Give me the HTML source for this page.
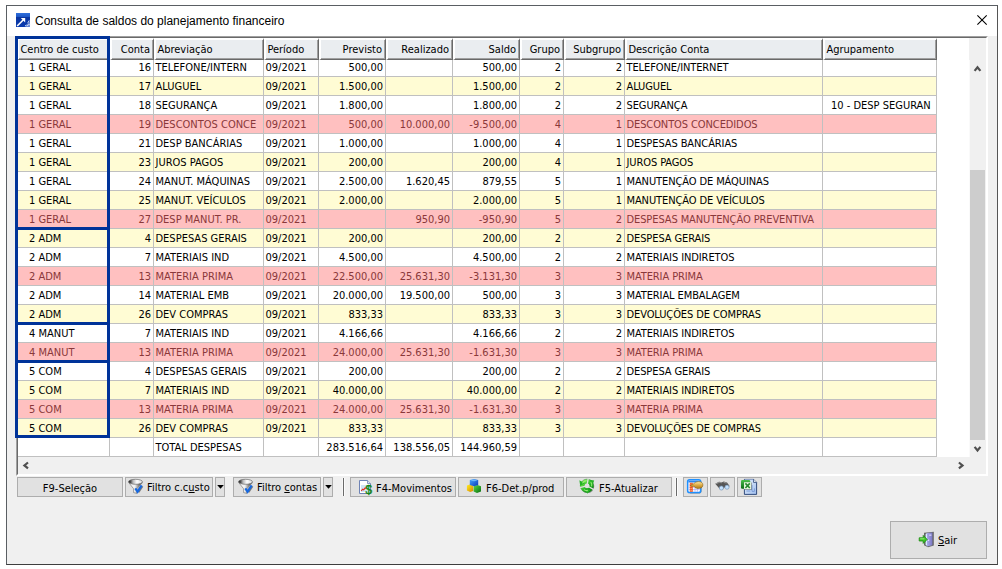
<!DOCTYPE html>
<html lang="pt-BR">
<head>
<meta charset="utf-8">
<title>Consulta de saldos do planejamento financeiro</title>
<style>
html,body{margin:0;padding:0;background:#fff;}
body{width:1002px;height:569px;overflow:hidden;position:relative;font-family:"DejaVu Sans Condensed","DejaVu Sans","Liberation Sans",sans-serif;font-stretch:condensed;font-size:11px;color:#000;}
.abs,.win div,.win svg{position:absolute;box-sizing:border-box;}
.win{position:absolute;left:6px;top:5px;width:992px;height:560px;border:1px solid #5a5e63;border-bottom-color:#3e3e3e;border-right-color:#555;background:#f0f0f0;box-sizing:border-box;}
.tb{left:0;top:0;width:990px;height:30px;background:#fff;}
.ttl{left:28px;top:6px;height:18px;line-height:18px;font-family:"Liberation Sans",sans-serif;font-size:12px;white-space:nowrap;}
.grid{left:9px;top:30px;width:972px;height:440px;border-top:1px solid #a0a0a0;border-left:1px solid #a0a0a0;border-right:1px solid #fff;border-bottom:1px solid #fff;background:#fff;}
.gin{left:0;top:0;width:970px;height:438px;border-top:1px solid #696969;border-left:1px solid #696969;border-right:1px solid #fff;border-bottom:1px solid #fff;background:#fff;overflow:hidden;}
.row{left:0;width:919px;height:19px;border-bottom:1px solid #c0c0c0;}
.row.w{background:#fff}.row.y{background:#fffcd4}.row.p{background:#ffc0c0;color:#8a383a}
.c{top:0;height:18px;line-height:20px;white-space:nowrap;overflow:hidden;border-right:1px solid #c0c0c0;padding:0 2px 0 1.5px;}
.c.r{text-align:right;padding-right:2px}
.c.c0{padding-left:12px}
.c.ag{padding-left:8px}
.c.ds{letter-spacing:-0.1px}
.h{top:0;height:22px;line-height:19px;background:#eaedf0;border-top:2px solid #fff;border-left:2px solid #fff;border-right:1px solid #696969;border-bottom:1px solid #696969;white-space:nowrap;overflow:hidden;padding:0 3px 0 1.4px;}
.h:after{content:"";position:absolute;right:0;bottom:0;left:-2px;top:-2px;border-right:1px solid #a0a0a0;border-bottom:1px solid #a0a0a0;}
.h.r{text-align:right}
.blue{background:#003399}
.btn{background:#e1e1e1;border:1px solid #adadad;height:20px;top:471px;white-space:nowrap;}
.btn .t{top:0;height:18px;line-height:18px;white-space:nowrap}

.sep{top:472px;width:1px;height:18px;background:#6a6a6a;box-shadow:1px 0 0 #fcfcfc,-1px 0 0 #f8f8f8}
u{text-decoration:underline;text-underline-offset:1px;text-decoration-thickness:1px}
</style>
</head>
<body>
<div class="win">
<div class="tb"></div>
<svg style="left:9px;top:7px" width="16" height="16" viewBox="0 0 16 16">
<defs><linearGradient id="tg" x1="0" y1="0" x2="0" y2="1"><stop offset="0" stop-color="#2f6fdc"/><stop offset="0.3" stop-color="#1c55c4"/><stop offset="0.32" stop-color="#0a35a0"/><stop offset="1" stop-color="#0b3cb0"/></linearGradient></defs>
<rect x="0" y="0" width="14" height="14" fill="url(#tg)"/>
<path d="M1.2 13 L7.4 6.8" stroke="#fff" stroke-width="1.6" fill="none"/>
<path d="M4.8 5 L9.2 5 L9.2 9.4 Z" fill="#fff"/>
<path d="M8.6 13.6 L10.4 11.2 L10.9 12.2 L12.2 8.6 L12.8 10 L13.6 7.2 L14 10.4 L14 14 Z" fill="#cfe0ff" opacity="0.5"/>
<path d="M9.2 13 l1.2-1.2 m0.6 1.6 l1.6-2.2 m-0.8-1.4 l1.4-2.4 m0.4 4.6 l0.6-1" stroke="#e8f0ff" stroke-width="0.9" fill="none" opacity="0.9"/>
</svg>
<div class="ttl">Consulta de saldos do planejamento financeiro</div>
<svg style="left:968px;top:7px" width="16" height="16" viewBox="0 0 16 16"><path d="M2.4 2.4 L11.7 11.7 M11.7 2.4 L2.4 11.7" stroke="#000" stroke-width="1.1" fill="none"/></svg>

<div class="grid"><div class="gin">
<div class="row w" style="top:20px">
<div class="c c0" style="left:-1px;width:93px">1 GERAL</div>
<div class="c r" style="left:92px;width:44px">16</div>
<div class="c l" style="left:136px;width:110px">TELEFONE/INTERN</div>
<div class="c l" style="left:246px;width:55px">09/2021</div>
<div class="c r" style="left:301px;width:67px">500,00</div>
<div class="c r" style="left:368px;width:67px"></div>
<div class="c r" style="left:435px;width:67px">500,00</div>
<div class="c r" style="left:502px;width:44px">2</div>
<div class="c r" style="left:546px;width:61px">2</div>
<div class="c ds" style="left:607px;width:198px">TELEFONE/INTERNET</div>
<div class="c ag" style="left:805px;width:114px"></div>
</div>
<div class="row y" style="top:39px">
<div class="c c0" style="left:-1px;width:93px">1 GERAL</div>
<div class="c r" style="left:92px;width:44px">17</div>
<div class="c l" style="left:136px;width:110px">ALUGUEL</div>
<div class="c l" style="left:246px;width:55px">09/2021</div>
<div class="c r" style="left:301px;width:67px">1.500,00</div>
<div class="c r" style="left:368px;width:67px"></div>
<div class="c r" style="left:435px;width:67px">1.500,00</div>
<div class="c r" style="left:502px;width:44px">2</div>
<div class="c r" style="left:546px;width:61px">2</div>
<div class="c ds" style="left:607px;width:198px">ALUGUEL</div>
<div class="c ag" style="left:805px;width:114px"></div>
</div>
<div class="row w" style="top:58px">
<div class="c c0" style="left:-1px;width:93px">1 GERAL</div>
<div class="c r" style="left:92px;width:44px">18</div>
<div class="c l" style="left:136px;width:110px">SEGURANÇA</div>
<div class="c l" style="left:246px;width:55px">09/2021</div>
<div class="c r" style="left:301px;width:67px">1.800,00</div>
<div class="c r" style="left:368px;width:67px"></div>
<div class="c r" style="left:435px;width:67px">1.800,00</div>
<div class="c r" style="left:502px;width:44px">2</div>
<div class="c r" style="left:546px;width:61px">2</div>
<div class="c ds" style="left:607px;width:198px">SEGURANÇA</div>
<div class="c ag" style="left:805px;width:114px">10 - DESP SEGURAN</div>
</div>
<div class="row p" style="top:77px">
<div class="c c0" style="left:-1px;width:93px">1 GERAL</div>
<div class="c r" style="left:92px;width:44px">19</div>
<div class="c l" style="left:136px;width:110px">DESCONTOS CONCE</div>
<div class="c l" style="left:246px;width:55px">09/2021</div>
<div class="c r" style="left:301px;width:67px">500,00</div>
<div class="c r" style="left:368px;width:67px">10.000,00</div>
<div class="c r" style="left:435px;width:67px">-9.500,00</div>
<div class="c r" style="left:502px;width:44px">4</div>
<div class="c r" style="left:546px;width:61px">1</div>
<div class="c ds" style="left:607px;width:198px">DESCONTOS CONCEDIDOS</div>
<div class="c ag" style="left:805px;width:114px"></div>
</div>
<div class="row w" style="top:96px">
<div class="c c0" style="left:-1px;width:93px">1 GERAL</div>
<div class="c r" style="left:92px;width:44px">21</div>
<div class="c l" style="left:136px;width:110px">DESP BANCÁRIAS</div>
<div class="c l" style="left:246px;width:55px">09/2021</div>
<div class="c r" style="left:301px;width:67px">1.000,00</div>
<div class="c r" style="left:368px;width:67px"></div>
<div class="c r" style="left:435px;width:67px">1.000,00</div>
<div class="c r" style="left:502px;width:44px">4</div>
<div class="c r" style="left:546px;width:61px">1</div>
<div class="c ds" style="left:607px;width:198px">DESPESAS BANCÁRIAS</div>
<div class="c ag" style="left:805px;width:114px"></div>
</div>
<div class="row y" style="top:115px">
<div class="c c0" style="left:-1px;width:93px">1 GERAL</div>
<div class="c r" style="left:92px;width:44px">23</div>
<div class="c l" style="left:136px;width:110px">JUROS PAGOS</div>
<div class="c l" style="left:246px;width:55px">09/2021</div>
<div class="c r" style="left:301px;width:67px">200,00</div>
<div class="c r" style="left:368px;width:67px"></div>
<div class="c r" style="left:435px;width:67px">200,00</div>
<div class="c r" style="left:502px;width:44px">4</div>
<div class="c r" style="left:546px;width:61px">1</div>
<div class="c ds" style="left:607px;width:198px">JUROS PAGOS</div>
<div class="c ag" style="left:805px;width:114px"></div>
</div>
<div class="row w" style="top:134px">
<div class="c c0" style="left:-1px;width:93px">1 GERAL</div>
<div class="c r" style="left:92px;width:44px">24</div>
<div class="c l" style="left:136px;width:110px">MANUT. MÁQUINAS</div>
<div class="c l" style="left:246px;width:55px">09/2021</div>
<div class="c r" style="left:301px;width:67px">2.500,00</div>
<div class="c r" style="left:368px;width:67px">1.620,45</div>
<div class="c r" style="left:435px;width:67px">879,55</div>
<div class="c r" style="left:502px;width:44px">5</div>
<div class="c r" style="left:546px;width:61px">1</div>
<div class="c ds" style="left:607px;width:198px">MANUTENÇÃO DE MÁQUINAS</div>
<div class="c ag" style="left:805px;width:114px"></div>
</div>
<div class="row y" style="top:153px">
<div class="c c0" style="left:-1px;width:93px">1 GERAL</div>
<div class="c r" style="left:92px;width:44px">25</div>
<div class="c l" style="left:136px;width:110px">MANUT. VEÍCULOS</div>
<div class="c l" style="left:246px;width:55px">09/2021</div>
<div class="c r" style="left:301px;width:67px">2.000,00</div>
<div class="c r" style="left:368px;width:67px"></div>
<div class="c r" style="left:435px;width:67px">2.000,00</div>
<div class="c r" style="left:502px;width:44px">5</div>
<div class="c r" style="left:546px;width:61px">1</div>
<div class="c ds" style="left:607px;width:198px">MANUTENÇÃO DE VEÍCULOS</div>
<div class="c ag" style="left:805px;width:114px"></div>
</div>
<div class="row p" style="top:172px">
<div class="c c0" style="left:-1px;width:93px">1 GERAL</div>
<div class="c r" style="left:92px;width:44px">27</div>
<div class="c l" style="left:136px;width:110px">DESP MANUT. PR.</div>
<div class="c l" style="left:246px;width:55px">09/2021</div>
<div class="c r" style="left:301px;width:67px"></div>
<div class="c r" style="left:368px;width:67px">950,90</div>
<div class="c r" style="left:435px;width:67px">-950,90</div>
<div class="c r" style="left:502px;width:44px">5</div>
<div class="c r" style="left:546px;width:61px">2</div>
<div class="c ds" style="left:607px;width:198px">DESPESAS MANUTENÇÃO PREVENTIVA</div>
<div class="c ag" style="left:805px;width:114px"></div>
</div>
<div class="row y" style="top:191px">
<div class="c c0" style="left:-1px;width:93px">2 ADM</div>
<div class="c r" style="left:92px;width:44px">4</div>
<div class="c l" style="left:136px;width:110px">DESPESAS GERAIS</div>
<div class="c l" style="left:246px;width:55px">09/2021</div>
<div class="c r" style="left:301px;width:67px">200,00</div>
<div class="c r" style="left:368px;width:67px"></div>
<div class="c r" style="left:435px;width:67px">200,00</div>
<div class="c r" style="left:502px;width:44px">2</div>
<div class="c r" style="left:546px;width:61px">2</div>
<div class="c ds" style="left:607px;width:198px">DESPESA GERAIS</div>
<div class="c ag" style="left:805px;width:114px"></div>
</div>
<div class="row w" style="top:210px">
<div class="c c0" style="left:-1px;width:93px">2 ADM</div>
<div class="c r" style="left:92px;width:44px">7</div>
<div class="c l" style="left:136px;width:110px">MATERIAIS IND</div>
<div class="c l" style="left:246px;width:55px">09/2021</div>
<div class="c r" style="left:301px;width:67px">4.500,00</div>
<div class="c r" style="left:368px;width:67px"></div>
<div class="c r" style="left:435px;width:67px">4.500,00</div>
<div class="c r" style="left:502px;width:44px">2</div>
<div class="c r" style="left:546px;width:61px">2</div>
<div class="c ds" style="left:607px;width:198px">MATERIAIS INDIRETOS</div>
<div class="c ag" style="left:805px;width:114px"></div>
</div>
<div class="row p" style="top:229px">
<div class="c c0" style="left:-1px;width:93px">2 ADM</div>
<div class="c r" style="left:92px;width:44px">13</div>
<div class="c l" style="left:136px;width:110px">MATERIA PRIMA</div>
<div class="c l" style="left:246px;width:55px">09/2021</div>
<div class="c r" style="left:301px;width:67px">22.500,00</div>
<div class="c r" style="left:368px;width:67px">25.631,30</div>
<div class="c r" style="left:435px;width:67px">-3.131,30</div>
<div class="c r" style="left:502px;width:44px">3</div>
<div class="c r" style="left:546px;width:61px">3</div>
<div class="c ds" style="left:607px;width:198px">MATERIA PRIMA</div>
<div class="c ag" style="left:805px;width:114px"></div>
</div>
<div class="row w" style="top:248px">
<div class="c c0" style="left:-1px;width:93px">2 ADM</div>
<div class="c r" style="left:92px;width:44px">14</div>
<div class="c l" style="left:136px;width:110px">MATERIAL EMB</div>
<div class="c l" style="left:246px;width:55px">09/2021</div>
<div class="c r" style="left:301px;width:67px">20.000,00</div>
<div class="c r" style="left:368px;width:67px">19.500,00</div>
<div class="c r" style="left:435px;width:67px">500,00</div>
<div class="c r" style="left:502px;width:44px">3</div>
<div class="c r" style="left:546px;width:61px">3</div>
<div class="c ds" style="left:607px;width:198px">MATERIAL EMBALAGEM</div>
<div class="c ag" style="left:805px;width:114px"></div>
</div>
<div class="row y" style="top:267px">
<div class="c c0" style="left:-1px;width:93px">2 ADM</div>
<div class="c r" style="left:92px;width:44px">26</div>
<div class="c l" style="left:136px;width:110px">DEV COMPRAS</div>
<div class="c l" style="left:246px;width:55px">09/2021</div>
<div class="c r" style="left:301px;width:67px">833,33</div>
<div class="c r" style="left:368px;width:67px"></div>
<div class="c r" style="left:435px;width:67px">833,33</div>
<div class="c r" style="left:502px;width:44px">3</div>
<div class="c r" style="left:546px;width:61px">3</div>
<div class="c ds" style="left:607px;width:198px">DEVOLUÇÕES DE COMPRAS</div>
<div class="c ag" style="left:805px;width:114px"></div>
</div>
<div class="row w" style="top:286px">
<div class="c c0" style="left:-1px;width:93px">4 MANUT</div>
<div class="c r" style="left:92px;width:44px">7</div>
<div class="c l" style="left:136px;width:110px">MATERIAIS IND</div>
<div class="c l" style="left:246px;width:55px">09/2021</div>
<div class="c r" style="left:301px;width:67px">4.166,66</div>
<div class="c r" style="left:368px;width:67px"></div>
<div class="c r" style="left:435px;width:67px">4.166,66</div>
<div class="c r" style="left:502px;width:44px">2</div>
<div class="c r" style="left:546px;width:61px">2</div>
<div class="c ds" style="left:607px;width:198px">MATERIAIS INDIRETOS</div>
<div class="c ag" style="left:805px;width:114px"></div>
</div>
<div class="row p" style="top:305px">
<div class="c c0" style="left:-1px;width:93px">4 MANUT</div>
<div class="c r" style="left:92px;width:44px">13</div>
<div class="c l" style="left:136px;width:110px">MATERIA PRIMA</div>
<div class="c l" style="left:246px;width:55px">09/2021</div>
<div class="c r" style="left:301px;width:67px">24.000,00</div>
<div class="c r" style="left:368px;width:67px">25.631,30</div>
<div class="c r" style="left:435px;width:67px">-1.631,30</div>
<div class="c r" style="left:502px;width:44px">3</div>
<div class="c r" style="left:546px;width:61px">3</div>
<div class="c ds" style="left:607px;width:198px">MATERIA PRIMA</div>
<div class="c ag" style="left:805px;width:114px"></div>
</div>
<div class="row w" style="top:324px">
<div class="c c0" style="left:-1px;width:93px">5 COM</div>
<div class="c r" style="left:92px;width:44px">4</div>
<div class="c l" style="left:136px;width:110px">DESPESAS GERAIS</div>
<div class="c l" style="left:246px;width:55px">09/2021</div>
<div class="c r" style="left:301px;width:67px">200,00</div>
<div class="c r" style="left:368px;width:67px"></div>
<div class="c r" style="left:435px;width:67px">200,00</div>
<div class="c r" style="left:502px;width:44px">2</div>
<div class="c r" style="left:546px;width:61px">2</div>
<div class="c ds" style="left:607px;width:198px">DESPESA GERAIS</div>
<div class="c ag" style="left:805px;width:114px"></div>
</div>
<div class="row y" style="top:343px">
<div class="c c0" style="left:-1px;width:93px">5 COM</div>
<div class="c r" style="left:92px;width:44px">7</div>
<div class="c l" style="left:136px;width:110px">MATERIAIS IND</div>
<div class="c l" style="left:246px;width:55px">09/2021</div>
<div class="c r" style="left:301px;width:67px">40.000,00</div>
<div class="c r" style="left:368px;width:67px"></div>
<div class="c r" style="left:435px;width:67px">40.000,00</div>
<div class="c r" style="left:502px;width:44px">2</div>
<div class="c r" style="left:546px;width:61px">2</div>
<div class="c ds" style="left:607px;width:198px">MATERIAIS INDIRETOS</div>
<div class="c ag" style="left:805px;width:114px"></div>
</div>
<div class="row p" style="top:362px">
<div class="c c0" style="left:-1px;width:93px">5 COM</div>
<div class="c r" style="left:92px;width:44px">13</div>
<div class="c l" style="left:136px;width:110px">MATERIA PRIMA</div>
<div class="c l" style="left:246px;width:55px">09/2021</div>
<div class="c r" style="left:301px;width:67px">24.000,00</div>
<div class="c r" style="left:368px;width:67px">25.631,30</div>
<div class="c r" style="left:435px;width:67px">-1.631,30</div>
<div class="c r" style="left:502px;width:44px">3</div>
<div class="c r" style="left:546px;width:61px">3</div>
<div class="c ds" style="left:607px;width:198px">MATERIA PRIMA</div>
<div class="c ag" style="left:805px;width:114px"></div>
</div>
<div class="row y" style="top:381px">
<div class="c c0" style="left:-1px;width:93px">5 COM</div>
<div class="c r" style="left:92px;width:44px">26</div>
<div class="c l" style="left:136px;width:110px">DEV COMPRAS</div>
<div class="c l" style="left:246px;width:55px">09/2021</div>
<div class="c r" style="left:301px;width:67px">833,33</div>
<div class="c r" style="left:368px;width:67px"></div>
<div class="c r" style="left:435px;width:67px">833,33</div>
<div class="c r" style="left:502px;width:44px">3</div>
<div class="c r" style="left:546px;width:61px">3</div>
<div class="c ds" style="left:607px;width:198px">DEVOLUÇÕES DE COMPRAS</div>
<div class="c ag" style="left:805px;width:114px"></div>
</div>
<div class="row w" style="top:400px">
<div class="c c0" style="left:-1px;width:93px"></div>
<div class="c r" style="left:92px;width:44px"></div>
<div class="c l" style="left:136px;width:110px">TOTAL DESPESAS</div>
<div class="c l" style="left:246px;width:55px"></div>
<div class="c r" style="left:301px;width:67px">283.516,64</div>
<div class="c r" style="left:368px;width:67px">138.556,05</div>
<div class="c r" style="left:435px;width:67px">144.960,59</div>
<div class="c r" style="left:502px;width:44px"></div>
<div class="c r" style="left:546px;width:61px"></div>
<div class="c ds" style="left:607px;width:198px"></div>
<div class="c ag" style="left:805px;width:114px"></div>
</div>
<div class="h l" style="left:-1px;width:93px">Centro de custo</div>
<div class="h r" style="left:92px;width:44px">Conta</div>
<div class="h l" style="left:136px;width:110px">Abreviação</div>
<div class="h l" style="left:246px;width:55px">Período</div>
<div class="h r" style="left:301px;width:67px">Previsto</div>
<div class="h r" style="left:368px;width:67px">Realizado</div>
<div class="h r" style="left:435px;width:67px">Saldo</div>
<div class="h r" style="left:502px;width:44px">Grupo</div>
<div class="h r" style="left:546px;width:61px">Subgrupo</div>
<div class="h l" style="left:607px;width:198px">Descrição Conta</div>
<div class="h l" style="left:805px;width:114px">Agrupamento</div>
<div style="left:951px;top:0;width:17px;height:436px;background:#f0f0f0"></div>
<div style="left:0;top:419px;width:968px;height:17px;background:#f0f0f0"></div>
<div style="left:951px;top:22px;width:1px;height:397px;background:#fafafa"></div>
<div style="left:952px;top:132px;width:15px;height:270px;background:#cdcdcd"></div>
<svg style="left:951px;top:22px" width="17" height="17" viewBox="0 0 17 17"><path d="M5.6 10.9 L8.5 7.3 L11.4 10.9" stroke="#505050" stroke-width="2.2" fill="none"/></svg>
<svg style="left:951px;top:402px" width="17" height="17" viewBox="0 0 17 17"><path d="M5.6 6.9 L8.5 10.5 L11.4 6.9" stroke="#505050" stroke-width="2.2" fill="none"/></svg>
<svg style="left:-1px;top:419px" width="17" height="17" viewBox="0 0 17 17"><path d="M11 5.5 L7.4 8.4 L11 11.3" stroke="#505050" stroke-width="2.2" fill="none"/></svg>
<svg style="left:934px;top:419px" width="17" height="17" viewBox="0 0 17 17"><path d="M6.9 5.5 L10.5 8.4 L6.9 11.3" stroke="#505050" stroke-width="2.2" fill="none"/></svg>

</div></div>
<div class="blue" style="left:8px;top:30px;width:3px;height:402px"></div>
<div class="blue" style="left:100px;top:30px;width:3px;height:402px"></div>
<div class="blue" style="left:8px;top:30px;width:95px;height:3px"></div>
<div class="blue" style="left:8px;top:221px;width:95px;height:3px"></div>
<div class="blue" style="left:8px;top:316px;width:95px;height:3px"></div>
<div class="blue" style="left:8px;top:354px;width:95px;height:3px"></div>
<div class="blue" style="left:8px;top:429px;width:95px;height:3px"></div>
<div class="btn" style="left:10px;top:471px;width:106px;height:20px"><div class="t" style="left:0;top:2px;width:104px;text-align:center">F9-Seleção</div></div>
<div class="btn" style="left:118px;top:471px;width:88px;height:20px"><svg style="left:2px;top:0px" width="16" height="16" viewBox="0 0 16 16">
<defs><linearGradient id="fg1" x1="0" y1="0" x2="1" y2="0"><stop offset="0" stop-color="#141414"/><stop offset="0.14" stop-color="#4a4a4a"/><stop offset="0.32" stop-color="#b8b8b8"/><stop offset="0.6" stop-color="#ffffff"/><stop offset="1" stop-color="#d8d8d8"/></linearGradient>
<linearGradient id="fh1" x1="0" y1="0" x2="1" y2="0"><stop offset="0" stop-color="#ffffff"/><stop offset="0.45" stop-color="#f0f0f0"/><stop offset="0.75" stop-color="#7a7a7a"/><stop offset="1" stop-color="#4c4c4c"/></linearGradient></defs>
<path d="M0.8 4.6 L5.6 10.8 L5.6 14.6 L8.8 15.4 L9 10.8 L14.4 4.6 Z" fill="url(#fh1)" stroke="#6e6e6e" stroke-width="0.6"/>
<ellipse cx="7.5" cy="3.8" rx="7" ry="2.5" fill="url(#fg1)" stroke="#6a6a6a" stroke-width="0.7"/>
<path d="M10.6 14.2 L14.6 8.2" stroke="#5a5a5a" stroke-width="1.6" fill="none" opacity="0.75"/>
<path d="M7.3 10.4 L9.6 13.7 L13.6 7.4" stroke="#1668e0" stroke-width="2.2" fill="none" stroke-linejoin="miter"/>
</svg><div class="t" style="left:21px;top:1px">Filtro c.c<u>u</u>sto</div></div>
<div class="btn" style="left:208px;top:471px;width:10px;height:20px"><svg style="left:1px;top:7px" width="7" height="4" viewBox="0 0 7 4"><path d="M0.2 0 H6.8 L3.5 3.7 Z" fill="#000"/></svg></div>
<div class="btn" style="left:226px;top:471px;width:88px;height:20px"><svg style="left:4px;top:0px" width="16" height="16" viewBox="0 0 16 16">
<defs><linearGradient id="fg2" x1="0" y1="0" x2="1" y2="0"><stop offset="0" stop-color="#141414"/><stop offset="0.14" stop-color="#4a4a4a"/><stop offset="0.32" stop-color="#b8b8b8"/><stop offset="0.6" stop-color="#ffffff"/><stop offset="1" stop-color="#d8d8d8"/></linearGradient>
<linearGradient id="fh2" x1="0" y1="0" x2="1" y2="0"><stop offset="0" stop-color="#ffffff"/><stop offset="0.45" stop-color="#f0f0f0"/><stop offset="0.75" stop-color="#7a7a7a"/><stop offset="1" stop-color="#4c4c4c"/></linearGradient></defs>
<path d="M0.8 4.6 L5.6 10.8 L5.6 14.6 L8.8 15.4 L9 10.8 L14.4 4.6 Z" fill="url(#fh2)" stroke="#6e6e6e" stroke-width="0.6"/>
<ellipse cx="7.5" cy="3.8" rx="7" ry="2.5" fill="url(#fg2)" stroke="#6a6a6a" stroke-width="0.7"/>
<path d="M10.6 14.2 L14.6 8.2" stroke="#5a5a5a" stroke-width="1.6" fill="none" opacity="0.75"/>
<path d="M7.3 10.4 L9.6 13.7 L13.6 7.4" stroke="#1668e0" stroke-width="2.2" fill="none" stroke-linejoin="miter"/>
</svg><div class="t" style="left:23px;top:1px">Filtro <u>c</u>ontas</div></div>
<div class="btn" style="left:316px;top:471px;width:10px;height:20px"><svg style="left:1px;top:7px" width="7" height="4" viewBox="0 0 7 4"><path d="M0.2 0 H6.8 L3.5 3.7 Z" fill="#000"/></svg></div>
<div class="sep" style="left:336px"></div>
<div class="btn" style="left:343px;top:471px;width:106px;height:20px"><svg style="left:7px;top:1px" width="16" height="17" viewBox="0 0 16 17">
<path d="M1.5 1.5 H9.5 L12.5 4.5 V14.5 H1.5 Z" fill="#fff" stroke="#6e83b5" stroke-width="1"/>
<path d="M9.5 1.5 V4.5 H12.5" fill="#dfe6f5" stroke="#6e83b5" stroke-width="0.8"/>
<rect x="3" y="6" width="8" height="7" fill="#cfe4f5"/>
<path d="M3.2 12 L4.6 10.2 L5.6 10.8 L7.2 9 L8.6 9.2" stroke="#e03020" stroke-width="1.2" fill="none"/>
<text x="7.4" y="14.6" transform="translate(7.4 0) scale(0.9 1) translate(-7.4 0)" font-family="Liberation Sans, sans-serif" font-size="13" fill="#128412" stroke="#128412" stroke-width="0.45">$</text>
</svg><div class="t" style="left:25px;top:2px">F4-Movimentos</div></div>
<div class="btn" style="left:451px;top:471px;width:106px;height:20px"><svg style="left:7px;top:0px" width="16" height="16" viewBox="0 0 16 16">
<defs><linearGradient id="cb" x1="0" y1="0" x2="1" y2="1"><stop offset="0" stop-color="#48a8ff"/><stop offset="1" stop-color="#0a3ab8"/></linearGradient>
<linearGradient id="cy" x1="0" y1="0" x2="1" y2="1"><stop offset="0" stop-color="#fff020"/><stop offset="1" stop-color="#d88400"/></linearGradient>
<linearGradient id="cg" x1="0" y1="0" x2="1" y2="1"><stop offset="0" stop-color="#58d848"/><stop offset="1" stop-color="#08700e"/></linearGradient></defs>
<path d="M7.6 8 L11.6 7 L15 8.2 L15 13.4 L11 15 L7.6 13.6 Z" fill="url(#cg)"/>
<path d="M0.9 7.6 L3.8 6.4 L7.2 7.8 L7.2 13 L4.2 14 L0.9 12.6 Z" fill="url(#cy)"/>
<path d="M3.8 2 L8 1 L12.2 2 L12.2 7 L8.2 8.2 L3.8 7 Z" fill="url(#cb)"/>
<path d="M4.4 2.4 L8 1.6 L11.6 2.4 L8 3.2 Z" fill="#7cc4ff" opacity="0.8"/>
</svg><div class="t" style="left:27px;top:2px">F6-Det.p/prod</div></div>
<div class="btn" style="left:559px;top:471px;width:106px;height:20px"><svg style="left:12px;top:0px" width="17" height="17" viewBox="0 0 17 17">
<defs><linearGradient id="rg" x1="0" y1="0" x2="1" y2="1"><stop offset="0" stop-color="#7be84e"/><stop offset="0.5" stop-color="#2ebc2c"/><stop offset="1" stop-color="#0e8a16"/></linearGradient></defs>
<g transform="translate(0.7 0.8)" opacity="0.45"><circle cx="8" cy="7.8" r="4.5" fill="none" stroke="#3a3a3a" stroke-width="4"/></g>
<circle cx="8" cy="7.8" r="4.5" fill="none" stroke="url(#rg)" stroke-width="4.2"/>
<circle cx="8" cy="7.8" r="6.7" fill="none" stroke="#128412" stroke-width="0.6" opacity="0.7"/>
<circle cx="8" cy="7.8" r="2.3" fill="#e1e1e1"/>
<path d="M8 7.8 L9.2 0.4 M8 7.8 L14.8 11.6 M8 7.8 L0.8 9.6" stroke="#e1e1e1" stroke-width="1.3"/>
<path d="M0.4 2.2 L1.2 8 L5.8 5.2 Z M15.2 2.4 L10.6 1.8 L13.6 6.4 Z M8.6 15.8 L6 11.4 L11.2 11.8 Z" fill="#24b226"/>
<path d="M3.4 5.2 C4.4 3.4 6 2.6 7.6 2.6 M11.8 4 C12.8 5.4 13 7 12.6 8.4 M5 11.6 C6 12.4 7.4 12.8 8.8 12.4" stroke="#a4f47c" stroke-width="1.1" fill="none" opacity="0.9"/>
</svg><div class="t" style="left:32px;top:2px">F5-Atualizar</div></div>
<div class="sep" style="left:669px"></div>
<div class="btn" style="left:676px;top:471px;width:25px;height:20px"><svg style="left:2px;top:0px" width="19" height="17" viewBox="0 0 19 17">
<defs><linearGradient id="hg" x1="0" y1="0" x2="0" y2="1"><stop offset="0" stop-color="#fbecb4"/><stop offset="0.45" stop-color="#e4b24c"/><stop offset="1" stop-color="#a87818"/></linearGradient></defs>
<rect x="2.5" y="2.5" width="13" height="12.9" rx="1.8" fill="#404040" opacity="0.6"/>
<rect x="1.65" y="1.65" width="13" height="12.9" rx="1.8" fill="#fff" stroke="#1e90ff" stroke-width="1.5"/>
<rect x="2.4" y="2.6" width="11.4" height="1.9" fill="#2f86ee"/>
<path d="M2.4 7 H13.8 M2.4 9.3 H13.8 M2.4 11.6 H13.8 M9 4.8 V13.8 M11.4 4.8 V13.8" stroke="#b4aef0" stroke-width="0.8"/>
<rect x="3.8" y="4.8" width="3" height="9" fill="#f2561e"/>
<path d="M4.3 6.2 H6.3 M4.3 8.4 H6.3 M4.3 10.6 H6.3 M4.3 12.6 H6.3" stroke="#ffb090" stroke-width="0.7"/>
<path d="M4.6 7.2 L8 5.6 C9 4.4 10.4 3.7 12.4 3.6 C15 3.5 16.9 4.8 16.9 6.9 C16.9 8.7 15.8 9.8 13.8 10.3 C11.8 10.8 10 10.4 9.2 9.6 C8.8 9.2 8.6 8.8 8.4 8.4 L5 8.2 Z" fill="url(#hg)" stroke="#8a6210" stroke-width="0.6"/>
</svg></div>
<div class="btn" style="left:703px;top:471px;width:25px;height:20px"><svg style="left:3px;top:0px" width="17" height="16" viewBox="0 0 17 16">
<path d="M1.2 5.8 L5 3.8 L8.2 4.2 L9.8 3.6 L13 4.4 L15.6 8 L13.4 10.6 L10.6 9.4 L8.2 11.4 L5.4 10.6 Z" fill="#565656"/>
<path d="M2 5.8 L5.2 4.4 L8 4.8 M9.6 4.4 L12.6 5" stroke="#a4a4a4" stroke-width="0.8" fill="none"/>
<circle cx="7.4" cy="10" r="2.1" fill="#c4e2ff" stroke="#7090b4" stroke-width="0.6"/>
<circle cx="13" cy="9.2" r="2.1" fill="#c4e2ff" stroke="#7090b4" stroke-width="0.6"/>
</svg></div>
<div class="btn" style="left:730px;top:471px;width:25px;height:20px"><svg style="left:2px;top:0px" width="18" height="18" viewBox="0 0 18 18">
<defs><linearGradient id="xd" x1="0" y1="0" x2="1" y2="1"><stop offset="0" stop-color="#eef4fd"/><stop offset="1" stop-color="#9cbcec"/></linearGradient>
<linearGradient id="xg" x1="0" y1="0" x2="0" y2="1"><stop offset="0" stop-color="#4cc04c"/><stop offset="1" stop-color="#0a6a14"/></linearGradient></defs>
<path d="M4.4 1.4 H13.6 L16.6 4.4 V16.4 H4.4 Z" fill="url(#xd)" stroke="#203c70" stroke-width="0.9"/>
<path d="M13.6 1.4 V4.4 H16.6" fill="#fff" stroke="#203c70" stroke-width="0.8"/>
<path d="M4.9 1.9 H13.2" stroke="#bcd0f4" stroke-width="1"/>
<path d="M6.4 13 H10.4 M12 7 V13.4 H14.4 V10.4" stroke="#7a9cd8" stroke-width="1" fill="none"/>
<rect x="1" y="2" width="9.2" height="8.8" rx="1.2" fill="url(#xg)"/>
<rect x="4.4" y="4.6" width="7.4" height="7.2" fill="#3a3a3a" opacity="0.6"/>
<rect x="4" y="4.2" width="7.2" height="7" fill="#e6f6dc"/>
<path d="M5.4 5.4 L9.8 10 M9.8 5.4 L5.4 10" stroke="#2a8a30" stroke-width="1.6"/>
</svg></div>
<div class="btn" style="left:883px;top:515px;width:97px;height:38px"><svg style="left:27px;top:9px" width="18" height="17" viewBox="0 0 18 17">
<defs><linearGradient id="dg" x1="0" y1="0" x2="1" y2="0"><stop offset="0" stop-color="#a9a8e6"/><stop offset="1" stop-color="#7a78c4"/></linearGradient></defs>
<path d="M6 1.8 L15.8 0.8 L15.8 14.4 L10 16.2 L6 14.2 Z" fill="#666"/>
<path d="M7.6 3 L9.2 2 L9.2 15.2 L7.6 13.6 Z" fill="#d4ecff"/>
<path d="M9 2 L14.4 1.6 L14.4 14.2 L9 15.6 Z" fill="url(#dg)"/>
<rect x="11.2" y="3.6" width="2.2" height="1" fill="#ececff"/>
<rect x="10" y="8.6" width="1.2" height="1.4" fill="#dcdcf4"/>
<path d="M1.2 6.8 H5.2 V4.4 L9.2 8.4 L5.2 12.4 V10 H1.2 Z" fill="#3fc428" stroke="#1c8a12" stroke-width="0.8"/>
<path d="M2.2 7.8 H6.4" stroke="#9af07a" stroke-width="1"/>
</svg><div class="t" style="left:47px;top:10px"><u>S</u>air</div></div>
</div>
</body>
</html>
